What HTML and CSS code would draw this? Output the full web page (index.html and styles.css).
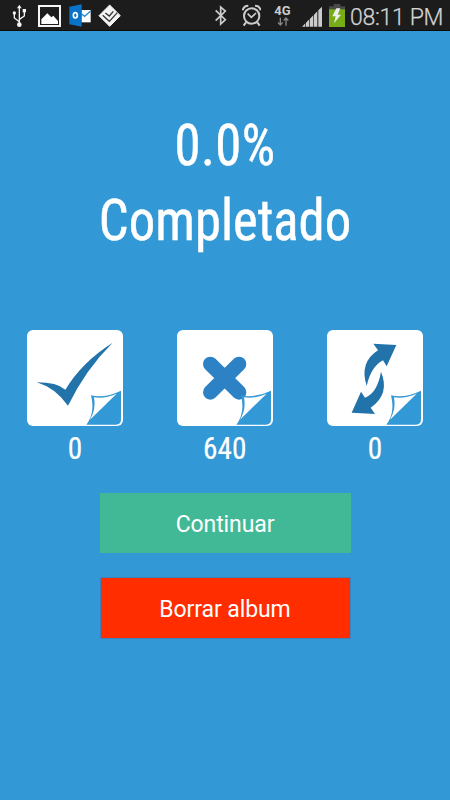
FILE: index.html
```html
<!DOCTYPE html>
<html lang="es">
<head>
<meta charset="utf-8">
<title>Album</title>
<link rel="stylesheet" href="styles.css">
</head>
<body>
<svg class="defs" width="0" height="0" aria-hidden="true">
  <symbol id="curl" viewBox="21 15 288 288">
    <path d="M213 211Q255 220 303 197V283Q303 299 288 299H199Q226 265 213 211Z" fill="#3398d6"/>
    <path d="M222 217Q254 222 290 206L210 284Q229 253 222 217Z" fill="#fff"/>
  </symbol>
</svg>
<header class="status">
  <div class="group">
    <svg class="usb" viewBox="36 12 42 72" fill="none" stroke="#f4f4f4" stroke-width="4"><path d="M58 20V75M58 65L43 54V40M58 58L73 48V32"/><path d="M51 25L58 14L65 25Z" fill="#f4f4f4" stroke="none"/><circle cx="58" cy="74" r="7" fill="#f4f4f4" stroke="none"/><circle cx="43" cy="39" r="5" fill="#f4f4f4" stroke="none"/><path d="M68 27h10v10H68Z" fill="#f4f4f4" stroke="none"/></svg>
    <svg class="photo" viewBox="114 15 69 66"><path d="M117 18H180V78H117Z" fill="none" stroke="#f4f4f4" stroke-width="6"/><path d="M124 72V58L142 40L154 52L160 47L174 63V72Z" fill="#fff"/></svg>
    <svg class="outlook" viewBox="206 12 66 69"><path d="M243 30H271V67H243Z" fill="#fff"/><path d="M243 41L253 49L271 33" stroke="#2589cf" stroke-width="4" fill="none"/><path d="M207 20L244 13V80L207 73Z" fill="#0873c8"/><ellipse cx="225" cy="46" rx="6" ry="8" fill="none" stroke="#fff" stroke-width="5"/></svg>
    <svg class="swarm" viewBox="294 12 69 69"><path d="M329 15L361 47L329 79L297 47Z" fill="#f4f4f4" stroke="#f4f4f4" stroke-width="3" stroke-linejoin="round"/><path d="M308 46L328 64L352 38M316 39L328 48L340 34" fill="none" stroke="#333" stroke-width="4"/></svg>
  </div>
  <div class="group right">
    <svg class="bluetooth" viewBox="21 15 39 63" fill="none" stroke="#ccc" stroke-width="5"><path d="M26 31L55 59L41 72V21L55 33L26 62"/></svg>
    <svg class="alarm" viewBox="102 12 57 69" fill="none" stroke="#ccc"><circle cx="131" cy="48" r="23" stroke-width="6"/><path d="M119 41L130 52L144 39" stroke-width="5"/><path d="M104 31Q107 17 121 17M141 17Q155 17 158 31" stroke-width="6"/><path d="M114 67L107 77M148 67L155 77" stroke-width="6"/></svg>
    <div class="net"><span>4G</span><svg viewBox="201 51 36 27" fill="none"><path d="M211 53V74M204 67L211 75L218 67" stroke="#888" stroke-width="4"/><path d="M228 77V55M221 62L228 54L235 62" stroke="#888" stroke-width="4"/></svg></div>
    <svg class="signal" viewBox="279 18 60 63" fill="#ccc"><path d="M279 80L289 70V80ZM291 68L301 58V80H291ZM303 56L313 46V80H303ZM315 44L325 34V80H315ZM328 31L339 20V80H328Z"/></svg>
    <svg class="battery" viewBox="12 12 48 69"><path d="M26 12H46V19H60V30H12V19H26Z" fill="#464b45"/><path d="M12 28H60V81H12Z" fill="#78ad17"/><path d="M34 25L22 49H32L27 70L48 44H38L46 25Z" fill="#eee"/></svg>
    <time class="clock">08:11 PM</time>
  </div>
</header>
<main>
  <h1><span class="percent">0.0%</span><span>Completado</span></h1>
  <section class="stats">
    <div class="stat">
      <svg class="tile" viewBox="21 15 288 288"><path d="M50 172Q111 172 136 194Q185 112 278 53Q197 133 144 242Q105 188 50 172Z" fill="#2373ab"/><use href="#curl" x="21" y="15" width="288" height="288"/></svg>
      <span>0</span>
    </div>
    <div class="stat">
      <svg class="tile" viewBox="21 15 288 288"><path d="M121 117L207 202M207 117L121 202" stroke="#2c82c5" stroke-width="44" stroke-linecap="round"/><use href="#curl" x="21" y="15" width="288" height="288"/></svg>
      <span>640</span>
    </div>
    <div class="stat">
      <svg class="tile" viewBox="21 15 288 288" fill="#2373ab"><path d="M160 56L229 60L200 124L189 106Q153 125 140 183Q117 112 174 76Z"/><path d="M183 140Q211 207 152 248L165 267L95 263L123 200L135 218Q172 204 183 140Z"/><use href="#curl" x="21" y="15" width="288" height="288"/></svg>
      <span>0</span>
    </div>
  </section>
  <div class="actions">
    <button class="go">Continuar</button>
    <button class="erase">Borrar album</button>
  </div>
</main>
</body>
</html>
```

FILE: styles.css
```css
* { box-sizing: border-box; }
body {
  margin: 0;
  height: 800px;
  overflow: hidden;
  background: #3398d6;
  color: #fff;
  font-family: Roboto, sans-serif;
}
.defs { display: block; height: 0; }
svg { display: block; flex: none; }
.status {
  height: 31px;
  background: #1c1c1c;
  border-bottom: 1px solid #0c0c0c;
  display: flex;
  justify-content: space-between;
  padding: 4px 6px 0 12px;
}
.group { display: flex; align-items: flex-start; }
.usb { width: 14px; height: 24px; }
.photo { width: 23px; height: 22px; margin: 1px 0 0 12px; }
.outlook { width: 22px; height: 23px; margin-left: 8px; }
.swarm { width: 23px; height: 23px; margin-left: 7px; }
.bluetooth { width: 13px; height: 21px; margin-top: 1px; }
.alarm { width: 19px; height: 23px; margin-left: 15px; }
.net { width: 17px; margin-left: 13px; font-size: 13px; line-height: 13px; font-weight: 700; color: #ccc; display: flex; flex-direction: column; align-items: center; }
.net svg { width: 12px; height: 9px; }
.signal { width: 20px; height: 21px; margin: 2px 0 0 11px; }
.battery { width: 16px; height: 23px; margin-left: 7px; }
.clock { margin-left: 5px; width: 94px; font-size: 23px; line-height: 27px; font-weight: 300; letter-spacing: -.3px; color: #d6d6d6; -webkit-text-stroke: .25px #ccc; white-space: nowrap; }
.right { margin-right: 0; }
h1 {
  margin: 77px 0 0;
  display: flex;
  flex-direction: column;
  align-items: center;
  font-size: 57px;
  line-height: 75px;
  font-weight: 400;
  font-stretch: 75%;
  transform: scaleX(.925);
  -webkit-text-stroke: .5px #fff;
}
.percent { letter-spacing: .5px; }
.stats {
  margin: 72px 27px 0;
  display: flex;
  justify-content: space-between;
}
.stat {
  width: 96px;
  display: flex;
  flex-direction: column;
  align-items: center;
  font-size: 32px;
  line-height: 44px;
  font-stretch: 75%;
}
.stat span { transform: scaleX(.915); -webkit-text-stroke: .2px #fff; }
.tile { width: 96px; height: 96px; border-radius: 6px; background: #fff; }
.actions {
  width: 251px;
  margin: 23px auto 0;
  display: flex;
  flex-direction: column;
  gap: 24px;
}
button {
  height: 60px;
  border: 0;
  padding: 3px 0 0;
  color: #fff;
  font: 400 23px/30px Roboto, sans-serif;
  letter-spacing: -.1px;
}
.go { background: #42b996; }
.erase { height: 62px; background: #ff2d00; border: 1px solid #3c80b8; }
```
